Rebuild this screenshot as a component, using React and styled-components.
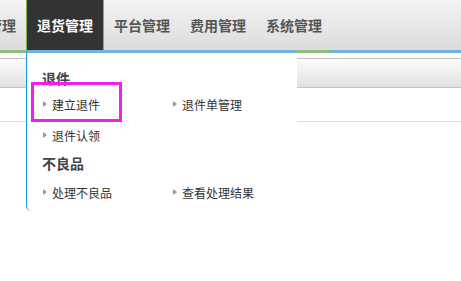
import React from "react";
import styled, { createGlobalStyle } from "styled-components";

const Global = createGlobalStyle`
  html, body { margin: 0; padding: 0; background: #fff; }
  body { font-family: "Noto Sans CJK SC", "Noto Sans", sans-serif; }
`;

const Page = styled.div`
  position: relative;
  width: 100%;
  height: 281px;
  overflow: hidden;
  background: #fff;
`;

const NavBar = styled.nav`
  display: flex;
  height: 50px;
  margin-left: -50px;
  background: linear-gradient(#f3f3f3, #dcdcdc);
`;

const NavItem = styled.div`
  display: flex;
  align-items: center;
  padding: 0 ${(p) => (p.$active ? "10px" : "10px")};
  font-size: 14px;
  font-weight: bold;
  letter-spacing: 0;
  color: ${(p) => (p.$active ? "#fff" : "#555")};
  background: ${(p) => (p.$active ? "#333" : "transparent")};
  border-left: ${(p) => (p.$active ? "1px solid #86b34f" : "none")};
  border-right: ${(p) => (p.$active ? "1px solid #86b34f" : "none")};
  line-height: 20px;
  padding-bottom: 1px;
`;

const Strip = styled.div`
  display: flex;
  height: 3px;
`;

const StripPart = styled.div`
  height: 3px;
  background: ${(p) => (p.$green ? "#8fbc7f" : "#6fb2e6")};
  width: ${(p) => (p.$w ? `${p.$w}px` : "auto")};
  flex: ${(p) => (p.$w ? "none" : "1")};
`;

const SubBar = styled.div`
  margin-top: 5px;
  height: 28px;
  border-top: 1px solid #c4c4c4;
  border-bottom: 1px solid #c4c4c4;
  background: linear-gradient(#fcfcfc, #e0e0e0);
`;

const ContentLine = styled.div`
  margin-top: 33px;
  border-top: 1px solid #dcdcdc;
`;

const Dropdown = styled.div`
  position: absolute;
  left: 26px;
  top: 50px;
  width: 270px;
  height: 158px;
  box-sizing: content-box;
  background: #fff;
  border-top: 3px solid #6fb2e6;
  border-left: 1px solid #1296e2;
  border-top-right-radius: 3px;
  border-bottom-left-radius: 5px;
  padding: 15px 0 0 15px;
  box-sizing: border-box;
  height: 161px;
  width: 271px;
`;

const Heading = styled.div`
  font-size: 14px;
  font-weight: bold;
  color: #444;
  height: 20px;
  line-height: 20px;
  margin-top: ${(p) => p.$mt || 0}px;
`;

const Grid = styled.div`
  display: grid;
  grid-template-columns: 130px 130px;
  grid-auto-rows: 30px;
  row-gap: 1px;
  margin-top: ${(p) => p.$mt || 0}px;
`;

const Item = styled.div`
  display: flex;
  align-items: center;
  font-size: 12px;
  color: #333;
  height: 30px;
`;

const Arrow = styled.span`
  display: inline-block;
  width: 0;
  height: 0;
  margin-left: 1px;
  margin-right: 5px;
  border-top: 3px solid transparent;
  border-bottom: 3px solid transparent;
  border-left: 4px solid #999;
`;

const Highlight = styled.div`
  position: absolute;
  left: 4px;
  top: 29px;
  width: 91px;
  height: 40px;
  box-sizing: border-box;
  border: 3px solid #f020f0;
  pointer-events: none;
`;

const navs = ["订单管理", "退货管理", "平台管理", "费用管理", "系统管理"];

export default function App() {
  return (
    <Page>
      <Global />
      <NavBar>
        {navs.map((n) => (
          <NavItem key={n} $active={n === "退货管理"}>
            {n}
          </NavItem>
        ))}
      </NavBar>
      <Strip>
        <StripPart $green $w={332} />
        <StripPart />
      </Strip>
      <SubBar />
      <ContentLine />
      <Dropdown>
        <Heading>退件</Heading>
        <Grid $mt={1}>
          <Item><Arrow />建立退件</Item>
          <Item><Arrow />退件单管理</Item>
          <Item><Arrow />退件认领</Item>
        </Grid>
        <Heading $mt={3}>不良品</Heading>
        <Grid $mt={4}>
          <Item><Arrow />处理不良品</Item>
          <Item><Arrow />查看处理结果</Item>
        </Grid>
        <Highlight />
      </Dropdown>
    </Page>
  );
}
